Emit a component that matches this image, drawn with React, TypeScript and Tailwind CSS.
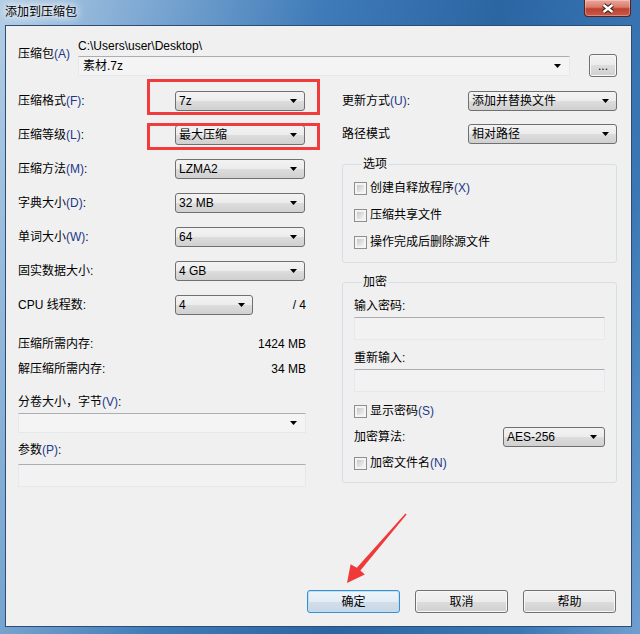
import React from "react";

// --- small win7 widgets ---
const DropArrow = () => (
  <svg width="7" height="4" viewBox="0 0 7 4" className="shrink-0">
    <polygon points="0,0 7,0 3.5,4" fill="#000" />
  </svg>
);

const Key = ({ k }: { k: string }) => <span className="text-[#22378a]">({k})</span>;

function Combo({ value, className }: { value: string; className: string }) {
  return (
    <div
      className={`h-[20px] flex items-center justify-between pl-[3px] pr-[7px] rounded-[3px] border border-[#707070] bg-[linear-gradient(#f3f3f3_0%,#ececec_50%,#dddddd_50%,#d0d0d0_100%)] ${className}`}
    >
      <span className="leading-[14px]">{value}</span>
      <DropArrow />
    </div>
  );
}

function EditCombo({ value, className }: { value: string; className: string }) {
  return (
    <div
      className={`flex items-center justify-between pl-[4px] pr-[8px] border border-[#e3e9ef] border-t-[#abadb3] bg-[#f4f4f4] rounded-[1px] ${className}`}
    >
      <span className="leading-[14px]">{value}</span>
      <DropArrow />
    </div>
  );
}

const TextBox = ({ className }: { className: string }) => (
  <div className={`h-[23px] border border-[#e3e9ef] border-t-[#abadb3] bg-[#f2f2f2] rounded-[1px] ${className}`} />
);

function Check({ children }: { children: React.ReactNode }) {
  return (
    <div className="flex items-center h-[14px] gap-[3px]">
      <span className="w-[13px] h-[13px] border border-[#8e8f8f] bg-[#f4f4f4] p-[2px] shrink-0">
        <span className="block w-full h-full bg-[linear-gradient(135deg,#c8c8c8,#f4f4f4)]" />
      </span>
      <span className="leading-[14px]">{children}</span>
    </div>
  );
}

function Row({ label, children }: { label: React.ReactNode; children: React.ReactNode }) {
  return (
    <div className="flex items-center h-[20px]">
      <div className="w-[157px] leading-[14px]">{label}</div>
      {children}
    </div>
  );
}

function WinButton({ label, primary }: { label: string; primary?: boolean }) {
  return (
    <div
      className={
        primary
          ? "w-[93px] h-[23px] flex items-center justify-center rounded-[3px] border border-[#3d8ccc] shadow-[inset_0_0_0_1px_#b9e2f8] bg-[linear-gradient(#edf4fa_0%,#e3ecf5_50%,#d3dfea_50%,#c8d6e4_100%)]"
          : "w-[93px] h-[23px] flex items-center justify-center rounded-[3px] border border-[#707070] shadow-[inset_0_0_0_1px_#f8f8f8] bg-[linear-gradient(#f2f2f2_0%,#ebebeb_50%,#dddddd_50%,#cfcfcf_100%)]"
      }
    >
      {label}
    </div>
  );
}

const leftRows = [
  { label: <>压缩格式<Key k="F" />:</>, value: "7z" },
  { label: <>压缩等级<Key k="L" />:</>, value: "最大压缩" },
  { label: <>压缩方法<Key k="M" />:</>, value: "LZMA2" },
  { label: <>字典大小<Key k="D" />:</>, value: "32 MB" },
  { label: <>单词大小<Key k="W" />:</>, value: "64" },
  { label: <>固实数据大小:</>, value: "4 GB" },
];

export default function App() {
  return (
    <div className="relative w-[640px] h-[634px] overflow-hidden flex flex-col pl-[5px] pr-[8px] pb-[7px] text-[12px] text-black font-['Liberation_Sans','Noto_Sans_CJK_SC',sans-serif] bg-[linear-gradient(105deg,#b3cde5_0%,#7ea9d3_18%,#3f7bb8_40%,#2b66a3_62%,#3a78b5_85%,#6f9fcf_100%)]">
      {/* title bar */}
      <div className="h-[25px] flex justify-between shrink-0">
        <div className="pt-[5px] leading-[14px] [text-shadow:0_0_6px_#fff,0_0_10px_#fff,0_0_14px_#fff]">添加到压缩包</div>
        <div className="w-[47px] h-[17px] mr-[1px] rounded-b-[4px] border border-t-0 border-[#5b2118] shadow-[inset_0_0_0_1px_rgba(255,255,255,0.3)] bg-[linear-gradient(#eba89b_0%,#d9796a_45%,#c0402f_55%,#c75a4c_100%)] flex items-center justify-center">
          <svg width="14" height="11" viewBox="0 0 14 11">
            <path d="M2.5 2 L11.5 9 M11.5 2 L2.5 9" stroke="#3a1a14" strokeWidth="4.5" />
            <path d="M2.5 2 L11.5 9 M11.5 2 L2.5 9" stroke="#fff" strokeWidth="2.4" />
          </svg>
        </div>
      </div>

      {/* client area */}
      <div className="relative flex-1 flex flex-col bg-[#f0f0f0] border border-[#2d4d72]">
        {/* archive path */}
        <div className="flex items-start pl-[12px]">
          <div className="w-[60px] mt-[21px] leading-[14px]">压缩包<Key k="A" /></div>
          <div className="w-[492px] mt-[13px]">
            <div className="leading-[14px]">{"C:\\Users\\user\\Desktop\\"}</div>
            <EditCombo value="素材.7z" className="mt-[3px] h-[20px]" />
          </div>
          <div className="ml-[19px] mt-[28px] w-[28px] h-[23px] flex items-end justify-center pb-[5px] leading-[10px] rounded-[3px] border border-[#707070] shadow-[inset_0_0_0_1px_#f8f8f8] bg-[linear-gradient(#f2f2f2_0%,#ebebeb_50%,#dddddd_50%,#cfcfcf_100%)]">
            ...
          </div>
        </div>

        {/* two columns */}
        <div className="flex pl-[12px] mt-[13px]">
          {/* left column */}
          <div className="w-[288px] flex flex-col">
            <div className="flex flex-col gap-[14px] mt-[1px]">
              {leftRows.map((r, i) => (
                <Row key={i} label={r.label}>
                  <Combo value={r.value} className="w-[130px]" />
                </Row>
              ))}
              <Row label="CPU 线程数:">
                <Combo value="4" className="w-[78px]" />
                <span className="ml-auto leading-[14px]">/ 4</span>
              </Row>
            </div>

            <div className="mt-[22px] flex justify-between leading-[14px]">
              <span>压缩所需内存:</span>
              <span>1424 MB</span>
            </div>
            <div className="mt-[11px] flex justify-between leading-[14px]">
              <span>解压缩所需内存:</span>
              <span>34 MB</span>
            </div>

            <div className="mt-[19px] leading-[14px]">分卷大小，字节<Key k="V" />:</div>
            <EditCombo value="" className="mt-[4px] h-[20px]" />

            <div className="mt-[10px] leading-[14px]">参数<Key k="P" />:</div>
            <TextBox className="mt-[7px]" />
          </div>

          {/* right column */}
          <div className="w-[275px] ml-[36px] mt-[1px] flex flex-col">
            <div className="flex items-center h-[20px]">
              <div className="w-[126px] leading-[14px]">更新方式<Key k="U" />:</div>
              <Combo value="添加并替换文件" className="w-[149px]" />
            </div>
            <div className="flex items-center h-[20px] mt-[13px]">
              <div className="w-[126px] leading-[14px]">路径模式</div>
              <Combo value="相对路径" className="w-[149px]" />
            </div>

            <fieldset className="mt-[13px] border border-[#d5dfe5] rounded-[3px] px-[11px] pb-[13px]">
              <legend className="ml-[8px] px-[1px] leading-[14px]">选项</legend>
              <div className="mt-[10px] flex flex-col gap-[13px]">
                <Check>创建自释放程序<Key k="X" /></Check>
                <Check>压缩共享文件</Check>
                <Check>操作完成后删除源文件</Check>
              </div>
            </fieldset>

            <fieldset className="mt-[12px] border border-[#d5dfe5] rounded-[3px] px-[11px] pb-[12px]">
              <legend className="ml-[8px] px-[1px] leading-[14px]">加密</legend>
              <div className="mt-[10px] leading-[14px]">输入密码:</div>
              <TextBox className="mt-[4px]" />
              <div className="mt-[11px] leading-[14px]">重新输入:</div>
              <TextBox className="mt-[4px]" />
              <div className="mt-[12px]">
                <Check>显示密码<Key k="S" /></Check>
              </div>
              <div className="mt-[9px] flex items-center justify-between h-[20px]">
                <span className="leading-[14px]">加密算法:</span>
                <Combo value="AES-256" className="w-[102px]" />
              </div>
              <div className="mt-[9px]">
                <Check>加密文件名<Key k="N" /></Check>
              </div>
            </fieldset>
          </div>
        </div>

        {/* buttons */}
        <div className="mt-auto flex justify-end gap-[15px] pr-[15px] pb-[13px]">
          <WinButton label="确定" primary />
          <WinButton label="取消" />
          <WinButton label="帮助" />
        </div>

        {/* red annotation boxes */}
        <div className="absolute left-[141px] top-[53px] w-[173px] h-[36px] border-[3px] border-[#f03c3c] pointer-events-none" />
        <div className="absolute left-[141px] top-[97px] w-[173px] h-[27px] border-[3px] border-[#f03c3c] pointer-events-none" />
      </div>

      {/* red annotation arrow */}
      <svg className="absolute left-0 top-0 pointer-events-none" width="640" height="634" viewBox="0 0 640 634">
        <polygon
          points="406.6,514.4 360.4,570.6 364.8,574.6 347,583 350.6,564.2 356.8,567.8 405.4,513.6"
          fill="#f03a3a"
        />
      </svg>
    </div>
  );
}
